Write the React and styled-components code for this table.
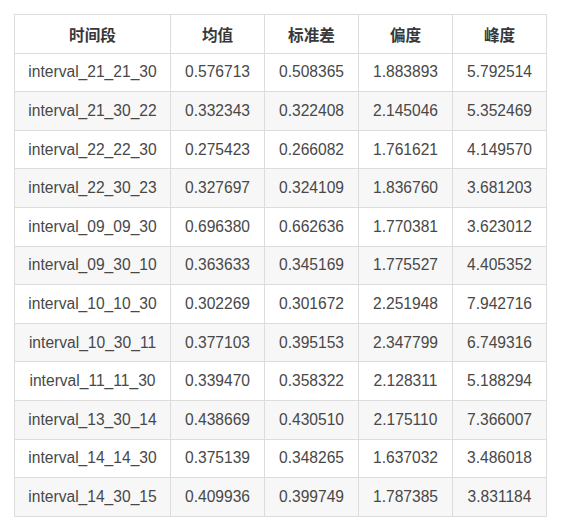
import React from "react";
import styled, { createGlobalStyle } from "styled-components";

const GlobalStyle = createGlobalStyle`
  html, body {
    margin: 0;
    padding: 0;
    background: #ffffff;
  }
`;

const Page = styled.div`
  padding: 14px 0 0 14px;
  font-family: "Liberation Sans", Arial, "Noto Sans CJK SC", sans-serif;
`;

const Table = styled.table`
  border-collapse: collapse;
  table-layout: fixed;
  width: 532px;
  font-size: 15.6px;
  color: #484848;
`;

const Row = styled.tr`
  background: ${(p) => (p.$striped ? "#f7f7f7" : "#ffffff")};
`;

const Cell = styled.td`
  border: 1px solid #dcdcdc;
  height: 38.6px;
  padding: 0 6px;
  text-align: center;
  white-space: nowrap;
  box-sizing: border-box;
`;

const HeadCell = styled(Cell).attrs({ as: "th" })`
  font-weight: bold;
  color: #383838;
  font-family: "Noto Sans CJK SC", sans-serif;
  font-size: 15.6px;
`;

const columns = [
  { title: "时间段", width: 156 },
  { title: "均值", width: 94 },
  { title: "标准差", width: 94 },
  { title: "偏度", width: 94 },
  { title: "峰度", width: 94 },
];

const rows = [
  ["interval_21_21_30", "0.576713", "0.508365", "1.883893", "5.792514"],
  ["interval_21_30_22", "0.332343", "0.322408", "2.145046", "5.352469"],
  ["interval_22_22_30", "0.275423", "0.266082", "1.761621", "4.149570"],
  ["interval_22_30_23", "0.327697", "0.324109", "1.836760", "3.681203"],
  ["interval_09_09_30", "0.696380", "0.662636", "1.770381", "3.623012"],
  ["interval_09_30_10", "0.363633", "0.345169", "1.775527", "4.405352"],
  ["interval_10_10_30", "0.302269", "0.301672", "2.251948", "7.942716"],
  ["interval_10_30_11", "0.377103", "0.395153", "2.347799", "6.749316"],
  ["interval_11_11_30", "0.339470", "0.358322", "2.128311", "5.188294"],
  ["interval_13_30_14", "0.438669", "0.430510", "2.175110", "7.366007"],
  ["interval_14_14_30", "0.375139", "0.348265", "1.637032", "3.486018"],
  ["interval_14_30_15", "0.409936", "0.399749", "1.787385", "3.831184"],
];

export default function App() {
  return (
    <>
      <GlobalStyle />
      <Page>
        <Table>
          <colgroup>
            {columns.map((c) => (
              <col key={c.title} style={{ width: c.width }} />
            ))}
          </colgroup>
          <thead>
            <Row>
              {columns.map((c) => (
                <HeadCell key={c.title}>{c.title}</HeadCell>
              ))}
            </Row>
          </thead>
          <tbody>
            {rows.map((r, i) => (
              <Row key={r[0]} $striped={i % 2 === 1}>
                {r.map((v, j) => (
                  <Cell key={j}>{v}</Cell>
                ))}
              </Row>
            ))}
          </tbody>
        </Table>
      </Page>
    </>
  );
}
